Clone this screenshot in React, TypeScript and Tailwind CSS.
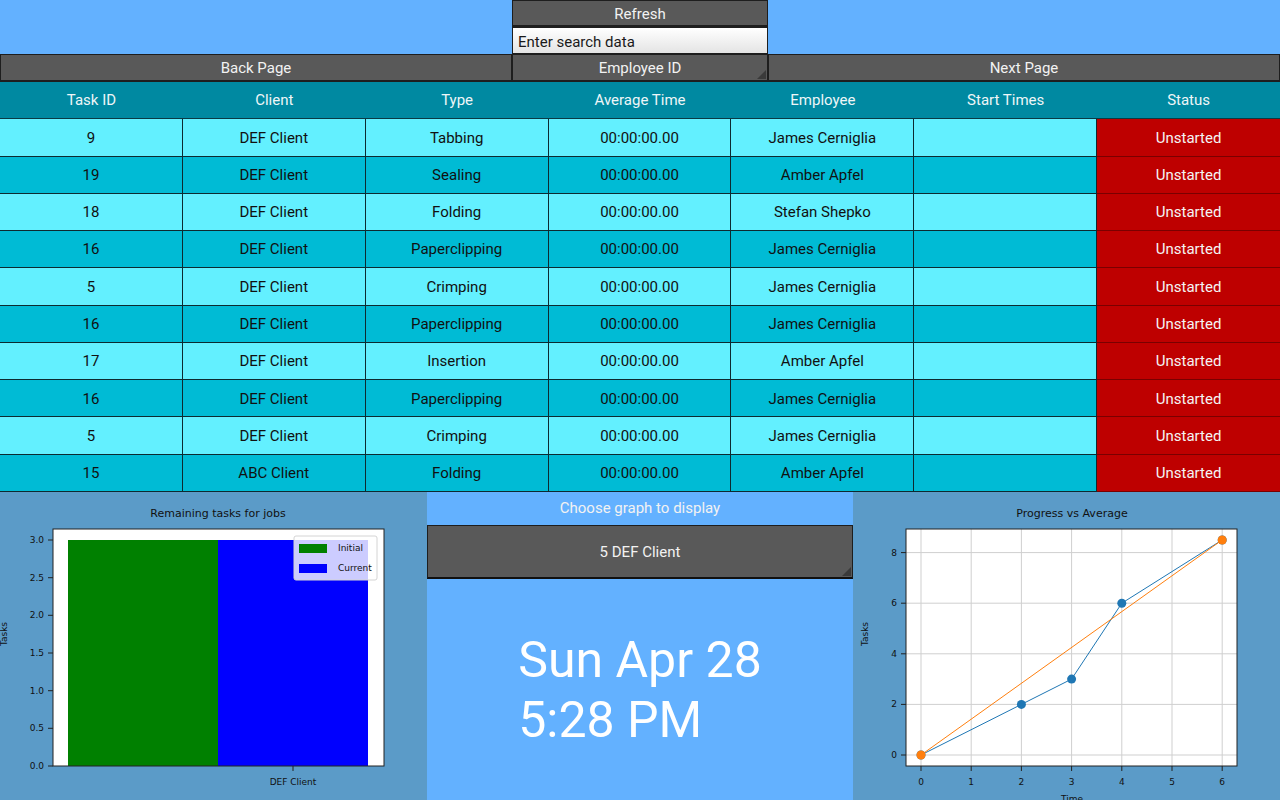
import React from "react";

type Row = {
  id: number;
  client: string;
  type: string;
  avg: string;
  employee: string;
  start: string;
  status: string;
};

const rows: Row[] = [
  { id: 9, client: "DEF Client", type: "Tabbing", avg: "00:00:00.00", employee: "James Cerniglia", start: "", status: "Unstarted" },
  { id: 19, client: "DEF Client", type: "Sealing", avg: "00:00:00.00", employee: "Amber Apfel", start: "", status: "Unstarted" },
  { id: 18, client: "DEF Client", type: "Folding", avg: "00:00:00.00", employee: "Stefan Shepko", start: "", status: "Unstarted" },
  { id: 16, client: "DEF Client", type: "Paperclipping", avg: "00:00:00.00", employee: "James Cerniglia", start: "", status: "Unstarted" },
  { id: 5, client: "DEF Client", type: "Crimping", avg: "00:00:00.00", employee: "James Cerniglia", start: "", status: "Unstarted" },
  { id: 16, client: "DEF Client", type: "Paperclipping", avg: "00:00:00.00", employee: "James Cerniglia", start: "", status: "Unstarted" },
  { id: 17, client: "DEF Client", type: "Insertion", avg: "00:00:00.00", employee: "Amber Apfel", start: "", status: "Unstarted" },
  { id: 16, client: "DEF Client", type: "Paperclipping", avg: "00:00:00.00", employee: "James Cerniglia", start: "", status: "Unstarted" },
  { id: 5, client: "DEF Client", type: "Crimping", avg: "00:00:00.00", employee: "James Cerniglia", start: "", status: "Unstarted" },
  { id: 15, client: "ABC Client", type: "Folding", avg: "00:00:00.00", employee: "Amber Apfel", start: "", status: "Unstarted" },
];

const headers = ["Task ID", "Client", "Type", "Average Time", "Employee", "Start Times", "Status"];

const DropCorner = () => (
  <svg className="absolute bottom-[1px] right-[1px]" width="9" height="9" viewBox="0 0 9 9">
    <polygon points="9,0 9,9 0,9" fill="#3a3a3a" />
  </svg>
);

const Button = ({ label, corner, className }: { label: string; corner?: boolean; className?: string }) => (
  <div
    className={`relative flex items-center justify-center border border-[#1e1e1e] bg-[#595959] pt-[2px] text-[15px] text-[#f2f2f2] ${className ?? ""}`}
  >
    {label}
    {corner && <DropCorner />}
  </div>
);

const BarChart = () => {
  const yTicks = [
    { v: "3.0", y: 48 },
    { v: "2.5", y: 85.7 },
    { v: "2.0", y: 123.3 },
    { v: "1.5", y: 161 },
    { v: "1.0", y: 198.7 },
    { v: "0.5", y: 236.3 },
    { v: "0.0", y: 274 },
  ];
  return (
    <svg width="427" height="308" viewBox="0 0 427 308" className="block" fontFamily="'DejaVu Sans', sans-serif">
      <text x="218" y="25" textAnchor="middle" fontSize="11" fill="#111">
        Remaining tasks for jobs
      </text>
      <rect x="53" y="37" width="331" height="237" fill="#fff" />
      <rect x="68" y="48" width="150" height="226" fill="#008000" />
      <rect x="218" y="48" width="150" height="226" fill="#0000ff" />
      <rect x="53" y="37" width="331" height="237" fill="none" stroke="#222" strokeWidth="1" />
      {yTicks.map((t) => (
        <g key={t.v}>
          <line x1="48" x2="53" y1={t.y} y2={t.y} stroke="#222" />
          <text x="44" y={t.y + 3} textAnchor="end" fontSize="9" fill="#111">
            {t.v}
          </text>
        </g>
      ))}
      <line x1="293" x2="293" y1="274" y2="279" stroke="#222" />
      <text x="293" y="293" textAnchor="middle" fontSize="9" fill="#111">
        DEF Client
      </text>
      <text transform="translate(7 142) rotate(-90)" textAnchor="middle" fontSize="9" fill="#111">
        Tasks
      </text>
      <rect x="294" y="44" width="83" height="44" rx="2" fill="#fff" fillOpacity="0.8" stroke="#d4d4d4" />
      <rect x="299" y="52" width="28" height="9" fill="#008000" />
      <rect x="299" y="72" width="28" height="9" fill="#0000ff" />
      <text x="338" y="59" fontSize="9" fill="#111">
        Initial
      </text>
      <text x="338" y="79" fontSize="9" fill="#111">
        Current
      </text>
    </svg>
  );
};

const LineChart = () => {
  const px = (t: number) => 68 + 50.2 * t;
  const py = (v: number) => 263 - 25.3 * v;
  const blue = [
    [0, 0],
    [2, 2],
    [3, 3],
    [4, 6],
    [6, 8.5],
  ];
  const orange = [
    [0, 0],
    [6, 8.5],
  ];
  const pts = (a: number[][]) => a.map(([t, v]) => `${px(t)},${py(v)}`).join(" ");
  return (
    <svg width="427" height="308" viewBox="0 0 427 308" className="block" fontFamily="'DejaVu Sans', sans-serif">
      <text x="219" y="25" textAnchor="middle" fontSize="11" fill="#111">
        Progress vs Average
      </text>
      <rect x="53" y="37" width="331" height="237" fill="#fff" />
      {[0, 1, 2, 3, 4, 5, 6].map((t) => (
        <g key={t}>
          <line x1={px(t)} x2={px(t)} y1="37" y2="274" stroke="#cfcfcf" strokeWidth="1" />
          <line x1={px(t)} x2={px(t)} y1="274" y2="279" stroke="#222" />
          <text x={px(t)} y="293" textAnchor="middle" fontSize="9" fill="#111">
            {t}
          </text>
        </g>
      ))}
      {[0, 2, 4, 6, 8].map((v) => (
        <g key={v}>
          <line x1="53" x2="384" y1={py(v)} y2={py(v)} stroke="#cfcfcf" strokeWidth="1" />
          <line x1="48" x2="53" y1={py(v)} y2={py(v)} stroke="#222" />
          <text x="44" y={py(v) + 3} textAnchor="end" fontSize="9" fill="#111">
            {v}
          </text>
        </g>
      ))}
      <polyline points={pts(blue)} fill="none" stroke="#1f77b4" strokeWidth="1" />
      {blue.map(([t, v]) => (
        <circle key={`b${t}`} cx={px(t)} cy={py(v)} r="4.5" fill="#1f77b4" />
      ))}
      <polyline points={pts(orange)} fill="none" stroke="#ff7f0e" strokeWidth="1" />
      {orange.map(([t, v]) => (
        <circle key={`o${t}`} cx={px(t)} cy={py(v)} r="4.5" fill="#ff7f0e" />
      ))}
      <rect x="53" y="37" width="331" height="237" fill="none" stroke="#222" strokeWidth="1" />
      <text transform="translate(15 142) rotate(-90)" textAnchor="middle" fontSize="9" fill="#111">
        Tasks
      </text>
      <text x="219" y="310" textAnchor="middle" fontSize="9" fill="#111">
        Time
      </text>
    </svg>
  );
};

export default function App() {
  return (
    <div className="flex h-[800px] w-[1280px] flex-col overflow-hidden bg-[#63b1ff] font-['Roboto',sans-serif]">
      {/* Top controls */}
      <div className="grid h-[54px] grid-cols-[512px_256px_512px]">
        <div />
        <div className="flex flex-col">
          <Button label="Refresh" className="h-[27px] border-b-2" />
          <div className="flex h-[27px] items-center border border-[#1e1e1e] bg-gradient-to-b from-white to-[#e4e4e4] px-[5px] pt-[3px] text-[15px] text-[#1a1a1a]">
            Enter search data
          </div>
        </div>
        <div />
      </div>
      <div className="grid h-[28px] grid-cols-[512px_256px_512px]">
        <Button label="Back Page" className="border-b-2" />
        <Button label="Employee ID" corner className="border-b-2" />
        <Button label="Next Page" className="border-b-2" />
      </div>

      {/* Table */}
      <div className="grid h-[410px] grid-rows-11">
        <div className="grid grid-cols-7 border-b border-[#0a3a44] bg-[#0089a1]">
          {headers.map((h) => (
            <div key={h} className="flex items-center justify-center pt-[1px] text-[15px] text-[#eef6f8]">
              {h}
            </div>
          ))}
        </div>
        {rows.map((r, i) => {
          const bg = i % 2 === 0 ? "bg-[#63f0ff]" : "bg-[#00bbd5]";
          const cells = [String(r.id), r.client, r.type, r.avg, r.employee, r.start];
          return (
            <div key={i} className="grid grid-cols-7">
              {cells.map((c, j) => (
                <div
                  key={j}
                  className={`flex items-center justify-center border-b border-r border-[#0d2a30] pt-[1px] text-[15px] text-[#111] ${bg}`}
                >
                  {c}
                </div>
              ))}
              <div className="flex items-center justify-center border-b border-[#7a0000] bg-[#be0000] pt-[1px] text-[15px] text-[#f4f4f4]">
                {r.status}
              </div>
            </div>
          );
        })}
      </div>

      {/* Bottom panels */}
      <div className="grid flex-1 grid-cols-3">
        <div className="overflow-hidden bg-[#5b9bc8]">
          <BarChart />
        </div>
        <div className="flex flex-col bg-[#63b1ff]">
          <div className="flex h-[33px] items-center justify-center text-[15px] text-[#f2f2f2]">
            Choose graph to display
          </div>
          <Button label="5 DEF Client" corner className="h-[54px] border-b-2 border-b-[#111]" />
          <div className="flex flex-1 items-center justify-center">
            <div className="text-left text-[50px] leading-[60px] text-white">
              <div>Sun Apr 28</div>
              <div>5:28 PM</div>
            </div>
          </div>
        </div>
        <div className="overflow-hidden bg-[#5b9bc8]">
          <LineChart />
        </div>
      </div>
    </div>
  );
}
